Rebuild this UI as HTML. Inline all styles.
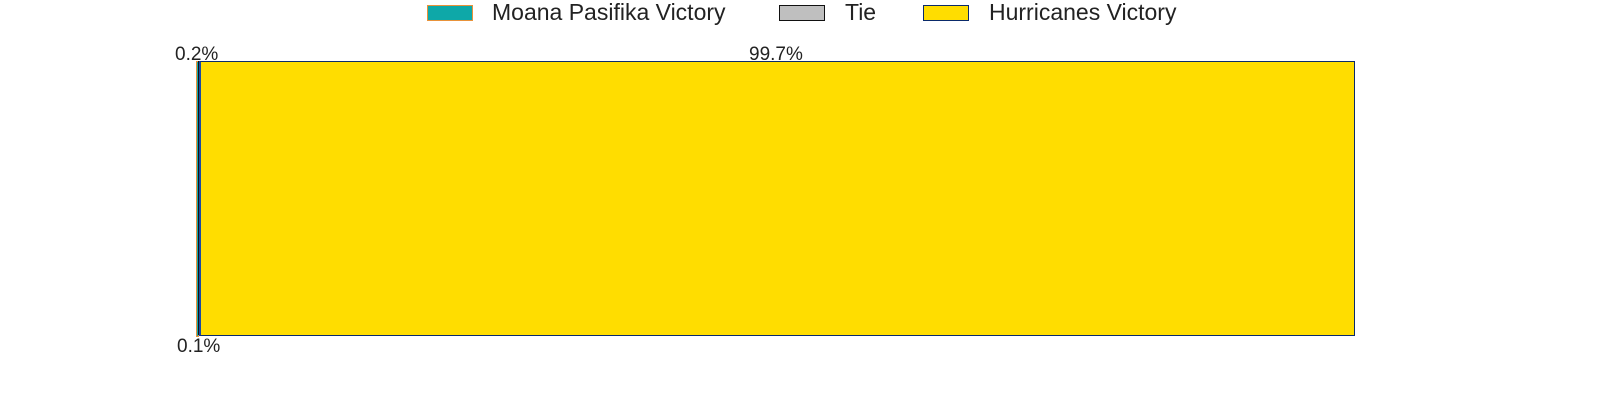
<!DOCTYPE html>
<html><head><style>
body{margin:0;width:1600px;height:400px;background:#fff;position:relative;font-family:"Liberation Sans",sans-serif;color:#222;overflow:hidden}
.a{position:absolute}
.t{position:absolute;font-size:19px;line-height:19px}
.l{position:absolute;font-size:23px;line-height:23px;top:1px}
</style></head><body>
<div class="a" style="left:427px;top:5px;width:44px;height:14px;background:#0ea8a8;border:1px solid #e8923a"></div>
<div class="l" style="left:492px">Moana Pasifika Victory</div>
<div class="a" style="left:779px;top:5px;width:44px;height:14px;background:#bfbfbf;border:1px solid #111"></div>
<div class="l" style="left:845px">Tie</div>
<div class="a" style="left:923px;top:5px;width:44px;height:14px;background:#ffdd00;border:1px solid #0a2a6a"></div>
<div class="l" style="left:989px">Hurricanes Victory</div>
<div class="a" style="left:196px;top:61px;width:1px;height:274px;background:#0ea8a8;border:1px solid #e8923a"></div>
<div class="a" style="left:198px;top:61px;width:1px;height:274px;background:#bfbfbf;border-left:1px solid #111"></div>
<div class="a" style="left:199px;top:61px;width:1153px;height:273px;background:#ffdd00;border:1px solid #0a2a6a;border-left:2px solid #1a4aa0"></div>
<div class="t" style="left:175px;top:45px">0.2%</div>
<div class="t" style="left:749px;top:45px">99.7%</div>
<div class="t" style="left:177px;top:337px">0.1%</div>
</body></html>
